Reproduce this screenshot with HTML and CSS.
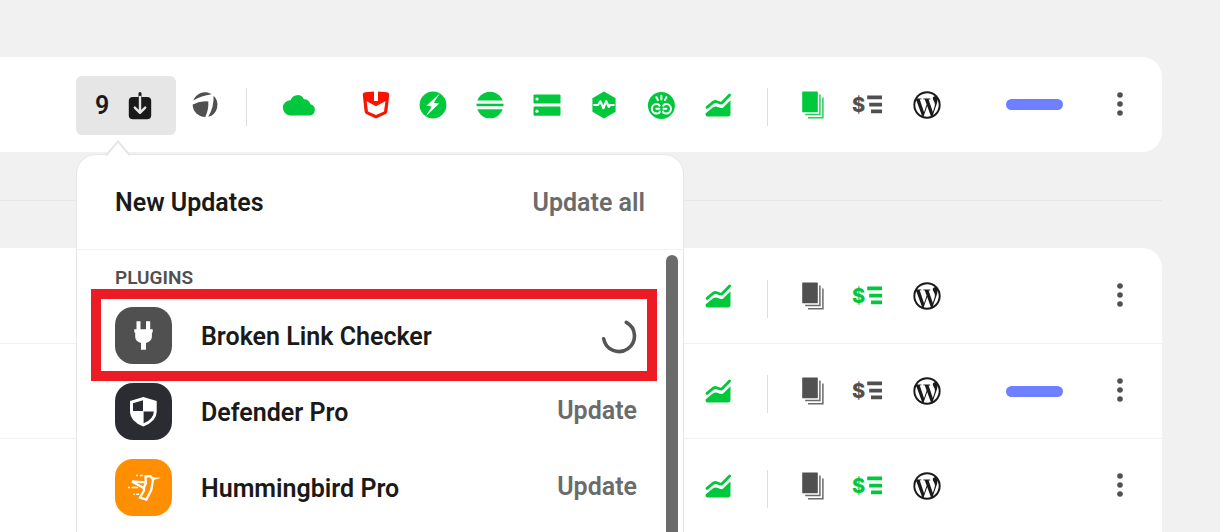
FILE: index.html
```html
<!DOCTYPE html>
<html lang="en">
<head>
    <meta charset="UTF-8">
    <meta name="viewport" content="width=device-width, initial-scale=1.0">
    <title>Sites</title>
    <link rel="stylesheet" href="styles.css">
</head>
<body>
    <svg class="sprite" aria-hidden="true">
        <symbol id="i-download" viewBox="0 0 28 28">
            <rect x="2.8" y="5" width="22.4" height="22.2" rx="4" fill="#1a1a1a"/>
            <path d="M14 1.500v4.500" fill="none" stroke="#1a1a1a" stroke-width="3" stroke-linecap="round"/>
            <path d="M14 5v15.5M8.8 15.6l5.2 5.2 5.2-5.2" fill="none" stroke="#e6e6e6" stroke-width="2.4" stroke-linecap="round" stroke-linejoin="round"/>
        </symbol>
        <symbol id="i-swirl" viewBox="0 0 28 28" fill="currentColor">
            <path d="M2.2 9.6A12.400 12.400 0 0 1 20.600 3.200Q10.500 4.600 2.200 9.600z"/>
            <path d="M1.700 13.400Q9.500 9.800 17.300 10.400Q18 18 14.200 26A12.400 12.400 0 0 1 1.700 13.400z"/>
            <path d="M22.600 4.800A12.400 12.400 0 0 1 17.200 25.800Q23 16.500 22.600 4.800z"/>
        </symbol>
        <symbol id="i-cloud" viewBox="0 0 34 28" fill="currentColor">
            <path d="M8.200 24.400A7.600 7.600 0 0 1 8.700 9.200A7 7 0 0 1 21.800 8.200A6.300 6.300 0 0 1 28.400 13.200A5.700 5.700 0 0 1 28 24.400z"/>
        </symbol>
        <symbol id="i-defender" viewBox="0 0 28 28" fill="currentColor">
            <path fill-rule="evenodd" d="M3 1.200L12 .4V10h4V.4L25 1.200Q27.300 1.500 27.200 4L25.400 20.600Q25.200 22.200 23.800 23L14 27.400 4.200 23Q2.800 22.200 2.600 20.600L.8 4Q.7 1.500 3 1.200zM4.600 10.200L6 20.600 14 24 22 20.600 23.400 10.200 14 15.200z"/>
        </symbol>
        <symbol id="i-bolt" viewBox="0 0 28 28">
            <circle cx="14" cy="14" r="13.400" fill="currentColor"/>
            <path d="M20.800 2.400L7.400 14.800 12.800 15.600 6.800 25.200 20.200 12.600 14.800 11.700z" fill="#fff"/>
        </symbol>
        <symbol id="i-smush" viewBox="0 0 28 28">
            <circle cx="14" cy="14" r="13.300" fill="currentColor"/>
            <path d="M0 9.500h28v8.800H0z" fill="#fff"/>
            <path d="M.5 12.700h27v2.500H.5z" fill="currentColor"/>
        </symbol>
        <symbol id="i-server" viewBox="0 0 28 28">
            <rect x=".5" y="3.400" width="27" height="9.200" rx="1.200" fill="currentColor"/>
            <rect x=".5" y="15.600" width="27" height="9.200" rx="1.200" fill="currentColor"/>
            <circle cx="4" cy="8" r="1.600" fill="#fff"/>
            <circle cx="4" cy="20.200" r="1.600" fill="#fff"/>
        </symbol>
        <symbol id="i-pulse" viewBox="0 0 28 28">
            <path d="M14 .6L25.600 7.200V20.800L14 27.400 2.400 20.800V7.200z" fill="currentColor"/>
            <path d="M4.200 14H8l2.400-3.600 3 6.800 2.800-7 2.600 5.600 1.400-1.800h3.600" fill="none" stroke="#fff" stroke-width="2.200" stroke-linejoin="round" stroke-linecap="round"/>
        </symbol>
        <symbol id="i-link" viewBox="0 0 28 28">
            <circle cx="14.400" cy="14.500" r="13.500" fill="currentColor"/>
            <g fill="none" stroke="#fff" stroke-width="2" stroke-linecap="round">
                <path d="M9.400 6.200l1.500 2.800M14.400 4.800v3.600M19.400 6.200l-1.500 2.800"/>
                <path d="M12.600 14.600Q11.600 13 9.600 13A4.800 4.800 0 0 0 9.600 22.600Q12.800 22.600 12.800 20.600M9.400 17.800H12.400"/>
                <path d="M16.200 14.600Q17.200 13 19.200 13A4.800 4.800 0 0 1 19.200 22.600Q16 22.600 16 20.600M19.400 17.800H16.400"/>
            </g>
        </symbol>
        <symbol id="i-chart" viewBox="0 0 28 28">
            <path d="M3 16.400L9.400 11.200Q11 10 12.800 10.800L16 12Q17.400 12.400 18.600 11.200L25.600 4" fill="none" stroke="currentColor" stroke-width="2.800" stroke-linecap="round" stroke-linejoin="round"/>
            <path d="M1.500 22.600L8.800 16.500Q11 14.800 13.200 15.700L16.600 17Q18.200 17.400 19.400 16.200L26.500 9.200V22.800Q26.500 25.500 24 25.500H3.500Q1.500 25.500 1.500 22.600z" fill="currentColor"/>
        </symbol>
        <symbol id="i-docs" viewBox="0 0 28 28">
            <rect x="3.200" y=".4" width="15.600" height="20.800" rx=".5" fill="currentColor"/>
            <path d="M20.900 3.400V23.600H6.200M23.900 6.400V26.700H9" fill="none" stroke="currentColor" stroke-width="1.500" opacity=".85"/>
        </symbol>
        <symbol id="i-lines" viewBox="0 0 15 28">
            <path d="M.2 4.600H15V8.200H.2zM2.200 11.800H15V15.400H2.200zM4 18.600H15V22.200H4z" fill="currentColor"/>
        </symbol>
        <symbol id="i-wordpress" viewBox="0 0 24 24">
            <circle cx="12" cy="12" r="11.700" fill="currentColor"/>
            <path transform="translate(.84 .84) scale(.93)" fill="#fff" d="M21.469 6.825c.84 1.537 1.318 3.300 1.318 5.175 0 3.979-2.156 7.456-5.363 9.325l3.295-9.527c.615-1.540.82-2.771.82-3.864 0-.405-.026-.78-.07-1.110m-7.981.105c.647-.03 1.232-.105 1.232-.105.582-.075.514-.93-.067-.899 0 0-1.755.135-2.880.135-1.064 0-2.850-.15-2.850-.15-.585-.03-.661.855-.075.885 0 0 .54.061 1.125.09l1.680 4.605-2.370 7.080L5.354 6.900c.649-.03 1.234-.1 1.234-.1.585-.075.516-.93-.065-.896 0 0-1.746.138-2.874.138-.2 0-.438-.008-.69-.015C4.911 3.150 8.235 1.215 12 1.215c2.809 0 5.365 1.072 7.286 2.833-.046-.003-.091-.009-.141-.009-1.060 0-1.812.923-1.812 1.914 0 .89.513 1.643 1.060 2.531.411.72.89 1.643.89 2.977 0 .915-.354 1.994-.821 3.479l-1.075 3.585-3.900-11.610zM12 22.784c-1.059 0-2.081-.153-3.048-.437l3.237-9.406 3.315 9.087c.024.053.05.101.078.149-1.120.393-2.325.609-3.582.609M1.211 12c0-1.564.336-3.050.935-4.390L7.290 21.709C3.694 19.960 1.212 16.271 1.211 12"/>
        </symbol>
        <symbol id="i-dots" viewBox="0 0 6 28" fill="currentColor">
            <circle cx="3" cy="4" r="2.800"/>
            <circle cx="3" cy="13" r="2.800"/>
            <circle cx="3" cy="22" r="2.800"/>
        </symbol>
    </svg>

    <main class="sites">
        <section class="card">
            <div class="row">
                <div class="updates">
                    <button class="updates-btn" type="button" aria-label="9 updates" aria-expanded="true">
                        <span>9</span>
                        <svg class="icon"><use href="#i-download"/></svg>
                    </button>

                    <div class="popover" role="dialog" aria-labelledby="updates-title">
                        <svg class="tail" viewBox="0 0 28 16" aria-hidden="true">
                            <path d="M2 16L14 1.500 26 16z" fill="#fff"/>
                            <path d="M2 15.500L14 1.500 26 15.500" fill="none" stroke="#e6e6e6" stroke-width="2"/>
                        </svg>
                        <div class="popover-head">
                            <h2 id="updates-title">New Updates</h2>
                            <button class="update-btn" type="button">Update all</button>
                        </div>
                        <div class="popover-body">
                            <div class="group">
                                <h3>PLUGINS</h3>
                                <ul class="plugins">
                                    <li class="plugin">
                                        <svg class="plugin-icon" viewBox="0 0 57 57" aria-hidden="true">
                                            <rect width="57" height="57" rx="18" fill="#505050"/>
                                            <path d="M21.500 14.300h4v8h5.500v-8h4.200v8h2.500v3.200h-.8v4.500Q36.500 34.500 31 36v6.700h-5V36Q20.500 34.500 20.200 30v-4.500h-.9v-3.200h2.200z" fill="#fff"/>
                                        </svg>
                                        <span class="plugin-name">Broken Link Checker</span>
                                        <svg class="spinner" viewBox="0 0 36 36" role="img" aria-label="Updating">
                                            <path d="M25.300 4.400A15.500 15.500 0 1 1 2.700 20.700" fill="none" stroke="#555" stroke-width="3.600" stroke-linecap="round"/>
                                        </svg>
                                        <span class="highlight"></span>
                                    </li>
                                    <li class="plugin">
                                        <svg class="plugin-icon" viewBox="0 0 57 57" aria-hidden="true">
                                            <rect width="57" height="57" rx="18" fill="#2b2c31"/>
                                            <path d="M28.300 14L41.700 18V29Q41.500 38.500 28.300 43.400Q15.200 38.500 15 29V18z" fill="#fff"/>
                                            <path d="M28 17.200V28H18V20.200zM28.600 28.400H38.800Q38.800 36 28.600 40.300z" fill="#2b2c31"/>
                                        </svg>
                                        <span class="plugin-name">Defender Pro</span>
                                        <button class="update-btn" type="button">Update</button>
                                    </li>
                                    <li class="plugin">
                                        <svg class="plugin-icon" viewBox="0 0 57 57" aria-hidden="true">
                                            <rect width="57" height="57" rx="18" fill="#ff8f00"/>
                                            <g fill="none" stroke="#fff" stroke-linejoin="miter">
                                                <path d="M30.500 17.500L35.500 17.200 38 20.400 36.300 31 31.400 40.600 25 38.600 29 31.500V28.500L31 24zM29.600 29.500L17 22.400 30.500 23.400" stroke-width="2.300"/>
                                                <path d="M21 16.400h2M25 16.400h3M13 28.600h2M16.500 28.600h6.500M18.200 35.200h1.600M21.200 35.200h3" stroke-width="1.500"/>
                                            </g>
                                            <path d="M34.500 17.200Q39 18.200 46 18.800L38 21.200z" fill="#fff"/>
                                        </svg>
                                        <span class="plugin-name">Hummingbird Pro</span>
                                        <button class="update-btn" type="button">Update</button>
                                    </li>
                                </ul>
                            </div>
                            <div class="scroll-thumb"></div>
                        </div>
                    </div>
                </div>
                <a class="cell" href="#" aria-label="Performance"><svg class="icon"><use href="#i-swirl"/></svg></a>
                <span class="cell split first"></span>
                <a class="cell cloud green" href="#" aria-label="Hosting"><svg class="icon wide"><use href="#i-cloud"/></svg></a>
                <a class="cell red" href="#" aria-label="Security"><svg class="icon"><use href="#i-defender"/></svg></a>
                <a class="cell green" href="#" aria-label="Speed"><svg class="icon"><use href="#i-bolt"/></svg></a>
                <a class="cell green" href="#" aria-label="Images"><svg class="icon"><use href="#i-smush"/></svg></a>
                <a class="cell green" href="#" aria-label="Backups"><svg class="icon"><use href="#i-server"/></svg></a>
                <a class="cell green" href="#" aria-label="Uptime"><svg class="icon"><use href="#i-pulse"/></svg></a>
                <a class="cell green" href="#" aria-label="Broken links"><svg class="icon"><use href="#i-link"/></svg></a>
                <a class="cell green" href="#" aria-label="Analytics"><svg class="icon"><use href="#i-chart"/></svg></a>
                <span class="cell split"></span>
                <a class="cell docs green" href="#" aria-label="Reports"><svg class="icon"><use href="#i-docs"/></svg></a>
                <a class="cell billing" href="#" aria-label="Billing"><span>$</span><svg class="icon narrow"><use href="#i-lines"/></svg></a>
                <a class="cell dark" href="#" aria-label="WP Admin"><svg class="icon"><use href="#i-wordpress"/></svg></a>
                <span class="cell label"><span class="pill"></span></span>
                <button class="cell menu" type="button" aria-label="Options"><svg class="icon dots"><use href="#i-dots"/></svg></button>
            </div>
        </section>

        <hr>

        <section class="card list">
            <div class="row">
                <a class="cell green" href="#" aria-label="Analytics"><svg class="icon"><use href="#i-chart"/></svg></a>
                <span class="cell split"></span>
                <a class="cell docs" href="#" aria-label="Reports"><svg class="icon"><use href="#i-docs"/></svg></a>
                <a class="cell billing green" href="#" aria-label="Billing"><span>$</span><svg class="icon narrow"><use href="#i-lines"/></svg></a>
                <a class="cell dark" href="#" aria-label="WP Admin"><svg class="icon"><use href="#i-wordpress"/></svg></a>
                <span class="cell label"></span>
                <button class="cell menu" type="button" aria-label="Options"><svg class="icon dots"><use href="#i-dots"/></svg></button>
            </div>
            <div class="row">
                <a class="cell green" href="#" aria-label="Analytics"><svg class="icon"><use href="#i-chart"/></svg></a>
                <span class="cell split"></span>
                <a class="cell docs" href="#" aria-label="Reports"><svg class="icon"><use href="#i-docs"/></svg></a>
                <a class="cell billing" href="#" aria-label="Billing"><span>$</span><svg class="icon narrow"><use href="#i-lines"/></svg></a>
                <a class="cell dark" href="#" aria-label="WP Admin"><svg class="icon"><use href="#i-wordpress"/></svg></a>
                <span class="cell label"><span class="pill"></span></span>
                <button class="cell menu" type="button" aria-label="Options"><svg class="icon dots"><use href="#i-dots"/></svg></button>
            </div>
            <div class="row">
                <a class="cell green" href="#" aria-label="Analytics"><svg class="icon"><use href="#i-chart"/></svg></a>
                <span class="cell split"></span>
                <a class="cell docs" href="#" aria-label="Reports"><svg class="icon"><use href="#i-docs"/></svg></a>
                <a class="cell billing green" href="#" aria-label="Billing"><span>$</span><svg class="icon narrow"><use href="#i-lines"/></svg></a>
                <a class="cell dark" href="#" aria-label="WP Admin"><svg class="icon"><use href="#i-wordpress"/></svg></a>
                <span class="cell label"></span>
                <button class="cell menu" type="button" aria-label="Options"><svg class="icon dots"><use href="#i-dots"/></svg></button>
            </div>
        </section>
    </main>
</body>
</html>
```

FILE: styles.css
```css
* {
    box-sizing: border-box;
}

body {
    margin: 0;
    background-color: #f1f1f1;
    color: #1a1a1a;
    font-family: Roboto, "Liberation Sans", sans-serif;
    font-size: 25px;
    font-weight: 600;
    overflow: hidden;
}

button {
    border: none;
    padding: 0;
    background: none;
    color: inherit;
    font: inherit;
    cursor: pointer;
}

h2, h3, ul {
    margin: 0;
    padding: 0;
    font-weight: 600;
}

hr {
    margin: 48px 0 47px;
    border: none;
    border-top: 1px solid #e6e6e6;
}

.sprite {
    display: none;
}

.sites {
    padding: 57px 58px 0 0;
}

.card {
    background-color: #fff;
    border-radius: 0 20px 20px 0;
}

.list {
    padding: 1px 0 20px;
}

.row {
    display: flex;
    align-items: center;
    justify-content: flex-end;
    height: 95px;
    padding-right: 13px;
}

.list .row {
    border-bottom: 1px solid #f1f1f1;
}

/* row cells */
.cell {
    display: flex;
    flex: none;
    align-items: center;
    justify-content: center;
    width: 57px;
    color: #505050;
    text-decoration: none;
}

.icon {
    display: block;
    width: 28px;
    height: 28px;
}

.icon.wide {
    width: 34px;
}

.icon.narrow {
    width: 15px;
}

.icon.dots {
    width: 6px;
}

.green {
    color: #00c83c;
}

.red {
    color: #fa1400;
}

.dark {
    color: #1a1a1a;
}

.split {
    width: 43px;
    padding-top: 5px;
}

.split::before {
    content: "";
    width: 1px;
    height: 38px;
    background-color: #ddd;
}

.split.first {
    width: 27px;
}

.cloud {
    width: 78px;
    margin-right: 9px;
}

.docs {
    width: 47px;
}

.billing {
    width: 62px;
    gap: 2px;
    font-family: Inter, Roboto, sans-serif;
    font-size: 20px;
    font-weight: 800;
    line-height: 28px;
}

.label {
    width: 113px;
    margin-left: 23px;
}

.pill {
    width: 57px;
    height: 11px;
    border-radius: 6px;
    background-color: #6e80ff;
}

.menu {
    width: 58px;
}

/* updates dropdown */
.updates {
    position: relative;
    flex: none;
    margin-top: 2px;
}

.updates-btn {
    display: flex;
    align-items: center;
    gap: 17px;
    width: 100px;
    height: 59px;
    padding-left: 19px;
    border-radius: 6px;
    background-color: #e6e6e6;
}

.popover {
    position: absolute;
    top: 78px;
    left: 0;
    z-index: 1;
    width: 608px;
    border: 1px solid #e6e6e6;
    border-radius: 20px;
    background-color: #fff;
}

.tail {
    position: absolute;
    top: -15px;
    left: 27px;
    width: 28px;
    height: 16px;
}

.popover-head {
    display: flex;
    align-items: center;
    justify-content: space-between;
    height: 95px;
    padding: 0 38px;
    border-bottom: 1px solid #f1f1f1;
}

.popover-head h2 {
    font-size: 25px;
}

.update-btn {
    color: #6b6b6b;
}

.popover-body {
    display: flex;
    justify-content: space-between;
    padding: 5px 5px 0 38px;
}

.group {
    width: 522px;
    padding-bottom: 38px;
}

.group h3 {
    padding: 11px 0 8px;
    color: #505050;
    font-size: 19px;
    line-height: 24px;
}

.plugins {
    list-style: none;
}

.plugin {
    position: relative;
    display: flex;
    align-items: center;
    height: 76px;
    padding-bottom: 1px;
}

.plugin-icon {
    width: 57px;
    height: 57px;
    margin-right: 29px;
}

.plugin-name {
    flex: 1;
    padding-top: 2px;
}

.plugin .update-btn {
    padding-bottom: 2px;
}

.spinner {
    width: 36px;
    height: 36px;
}

.highlight {
    position: absolute;
    inset: -9px -20px -7px -24px;
    border: 10px solid #ed1c24;
    pointer-events: none;
}

.scroll-thumb {
    width: 12px;
    border-radius: 6px;
    background-color: #6b6b6b;
}
```
